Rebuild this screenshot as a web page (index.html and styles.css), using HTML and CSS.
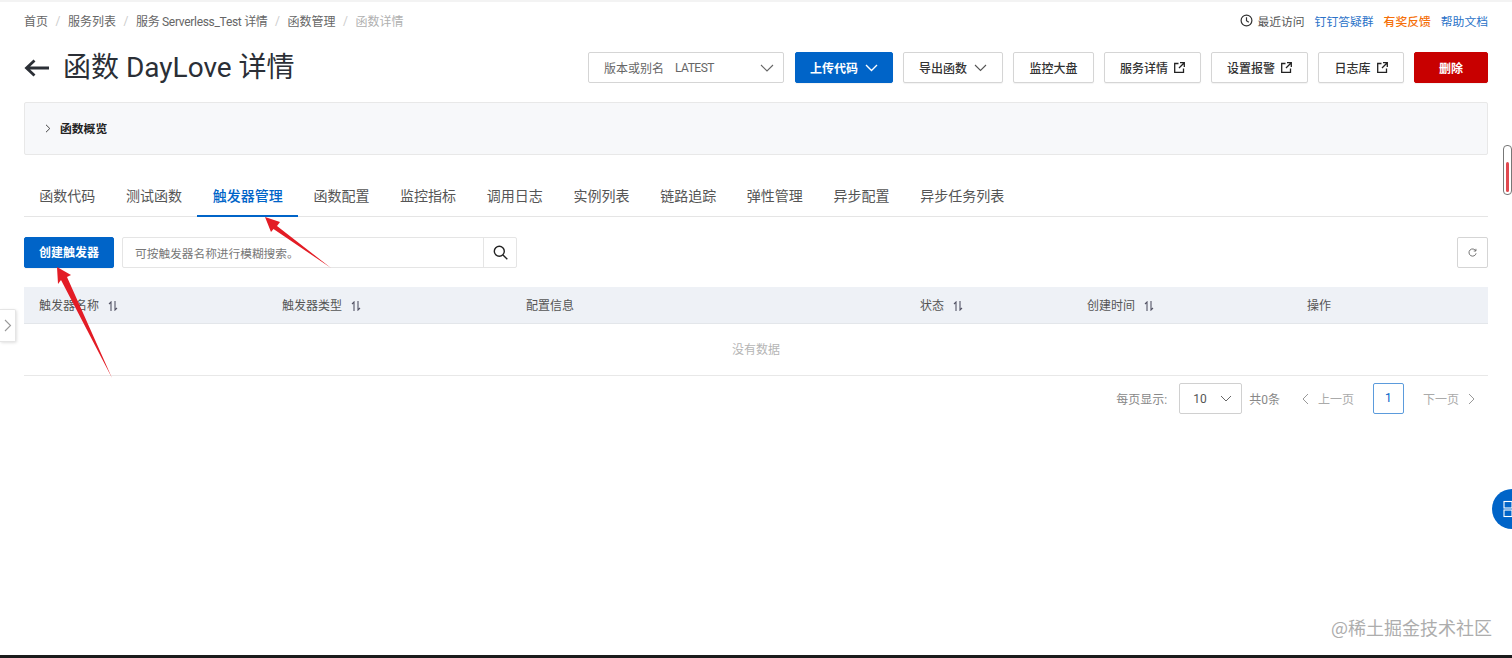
FILE: index.html
```html
<!doctype html>
<html lang="zh">
<head>
    <meta charset="utf-8">
    <meta name="viewport" content="width=device-width, initial-scale=1.0">
    <title>函数详情</title>
    <link rel="stylesheet" href="styles.css">
</head>
<body>
    <div class="top-strip"></div>
    <div class="page">
        <div class="crumb-row">
            <div class="breadcrumb">
                <span>首页</span><i>/</i>
                <span>服务列表</span><i>/</i>
                <span class="crumb-service">服务 Serverless_Test 详情</span><i>/</i>
                <span>函数管理</span><i>/</i>
                <span class="current">函数详情</span>
            </div>
            <div class="top-links">
                <span class="recent">
                    <svg width="13" height="13" viewBox="0 0 13 13" fill="none" stroke="#333" stroke-width="1.2"><circle cx="6.5" cy="6.5" r="5.4"/><path d="M6.5 3.2v3.5l2.3 1.5"/></svg>
                    最近访问
                </span>
                <a class="blue">钉钉答疑群</a>
                <a class="orange">有奖反馈</a>
                <a class="blue">帮助文档</a>
            </div>
        </div>

        <div class="title-row">
            <div class="title">
                <svg class="back" width="25" height="20" viewBox="0 0 25 20" fill="none" stroke="#2b2f36" stroke-width="2.8"><path d="M25 10H2.500M10.500 2.500L2.500 10l8 7.500"/></svg>
                <h1>函数 DayLove 详情</h1>
            </div>
            <div class="actions">
                <div class="version">
                    <span>版本或别名</span><span class="version-val">LATEST</span>
                    <svg class="chev" width="14" height="8" viewBox="0 0 14 8" fill="none" stroke="#666" stroke-width="1.1"><path d="M1 1l6 6 6-6"/></svg>
                </div>
                <button class="btn primary w-upload">上传代码
                    <svg width="13" height="8" viewBox="0 0 13 8" fill="none" stroke="#fff" stroke-width="1.4"><path d="M1 1l5.500 5.500L12 1"/></svg>
                </button>
                <button class="btn w-export">导出函数
                    <svg width="13" height="8" viewBox="0 0 13 8" fill="none" stroke="#555" stroke-width="1.1"><path d="M1 1l5.500 5.500L12 1"/></svg>
                </button>
                <button class="btn w-monitor">监控大盘</button>
                <button class="btn w-service">服务详情
                    <svg class="ext" width="11" height="11" viewBox="0 0 11 11" fill="none" stroke="#222" stroke-width="1.3"><path d="M4.500 1.500H.7v8.800h8.800V6.500M6 .7h4.300V5M10.300.7L5 6"/></svg>
                </button>
                <button class="btn w-alarm">设置报警
                    <svg class="ext" width="11" height="11" viewBox="0 0 11 11" fill="none" stroke="#222" stroke-width="1.3"><path d="M4.500 1.500H.7v8.800h8.800V6.500M6 .7h4.300V5M10.300.7L5 6"/></svg>
                </button>
                <button class="btn w-log">日志库
                    <svg class="ext" width="11" height="11" viewBox="0 0 11 11" fill="none" stroke="#222" stroke-width="1.3"><path d="M4.500 1.500H.7v8.800h8.800V6.500M6 .7h4.300V5M10.300.7L5 6"/></svg>
                </button>
                <button class="btn danger w-delete">删除</button>
            </div>
        </div>

        <div class="overview">
            <svg width="6" height="9" viewBox="0 0 6 9" fill="none" stroke="#444" stroke-width="1"><path d="M1 .8l3.800 3.700L1 8.200"/></svg>
            <span class="overview-label">函数概览</span>
        </div>

        <div class="tabs">
            <span class="tab">函数代码</span>
            <span class="tab">测试函数</span>
            <span class="tab active">触发器管理</span>
            <span class="tab">函数配置</span>
            <span class="tab">监控指标</span>
            <span class="tab">调用日志</span>
            <span class="tab">实例列表</span>
            <span class="tab">链路追踪</span>
            <span class="tab">弹性管理</span>
            <span class="tab">异步配置</span>
            <span class="tab">异步任务列表</span>
        </div>

        <div class="toolbar">
            <button class="btn primary w-create">创建触发器</button>
            <div class="search">
                <span class="search-text">可按触发器名称进行模糊搜索。</span>
                <span class="search-btn">
                    <svg width="15" height="15" viewBox="0 0 15 15" fill="none" stroke="#222" stroke-width="1.4"><circle cx="6.300" cy="6.300" r="5"/><path d="M10 10l4.300 4.300"/></svg>
                </span>
            </div>
            <span class="refresh">
                <svg width="9" height="9" viewBox="0 0 11 11" fill="none" stroke="#666" stroke-width="1.1"><path d="M9.500 3.500A4.400 4.400 0 1 0 9.900 6.500M9.700 1v2.700H7"/></svg>
            </span>
        </div>

        <div class="table-head">
            <span>触发器名称<svg class="sort" width="10" height="10" viewBox="0 0 10 10" fill="none" stroke="#556" stroke-width="1.1"><path d="M3 10V1L1 3M7 0v9l2-2"/></svg></span>
            <span>触发器类型<svg class="sort" width="10" height="10" viewBox="0 0 10 10" fill="none" stroke="#556" stroke-width="1.1"><path d="M3 10V1L1 3M7 0v9l2-2"/></svg></span>
            <span>配置信息</span>
            <span>状态<svg class="sort" width="10" height="10" viewBox="0 0 10 10" fill="none" stroke="#556" stroke-width="1.1"><path d="M3 10V1L1 3M7 0v9l2-2"/></svg></span>
            <span>创建时间<svg class="sort" width="10" height="10" viewBox="0 0 10 10" fill="none" stroke="#556" stroke-width="1.1"><path d="M3 10V1L1 3M7 0v9l2-2"/></svg></span>
            <span>操作</span>
        </div>
        <div class="table-empty">没有数据</div>

        <div class="pager">
            <span>每页显示:</span>
            <div class="page-size">
                <span>10</span>
                <svg width="12" height="7" viewBox="0 0 12 7" fill="none" stroke="#666" stroke-width="1"><path d="M1 1l5 5 5-5"/></svg>
            </div>
            <span>共0条</span>
            <span class="pg-link prev">
                <svg width="7" height="12" viewBox="0 0 7 12" fill="none" stroke="#999" stroke-width="1"><path d="M6 1L1 6l5 5"/></svg>
                上一页
            </span>
            <span class="pg-num">1</span>
            <span class="pg-link next">下一页
                <svg width="7" height="12" viewBox="0 0 7 12" fill="none" stroke="#999" stroke-width="1"><path d="M1 1l5 5-5 5"/></svg>
            </span>
        </div>
    </div>
    <div class="bottom-bar"></div>

    <!-- things lying over the page -->
    <div class="side-handle">
        <svg width="8" height="13" viewBox="0 0 8 13" fill="none" stroke="#999" stroke-width="1.1"><path d="M1 1l5.500 5.500L1 12"/></svg>
    </div>
    <div class="float-ball">
        <svg width="10" height="18" viewBox="0 0 10 18" fill="none" stroke="#fff" stroke-width="1.1"><rect x="2" y="1.500" width="8" height="6.500"/><rect x="2" y="10" width="8" height="6.500"/></svg>
    </div>
    <div class="scroll-thumb"><div class="scroll-fill"></div></div>
    <div class="watermark">@稀土掘金技术社区</div>
    <svg class="arrows" width="1512" height="658" viewBox="0 0 1512 658" fill="#e31c25">
        <polygon points="265,217 280,222 277,226 331,268 273.500,229 271,232"/>
        <polygon points="57,267 71,275 67,277 112,378 61,280 58,284"/>
    </svg>
</body>
</html>
```

FILE: styles.css
```css
* {
    box-sizing: border-box;
}
html, body {
    margin: 0;
    height: 658px;
    overflow: hidden;
}
body {
    position: relative;
    display: flex;
    flex-direction: column;
    background: #fff;
    color: #333;
    font-family: Roboto, "Noto Sans CJK SC", sans-serif;
    font-size: 12px;
}
.top-strip {
    height: 2px;
    background: #f3f3f3;
}
.bottom-bar {
    height: 3px;
    background: #1b1b1b;
}
.page {
    flex: 1;
    padding: 0 24px;
}

/* breadcrumb */
.crumb-row {
    height: 37px;
    display: flex;
    justify-content: space-between;
    align-items: center;
}
.breadcrumb {
    display: flex;
    align-items: center;
    color: #666;
}
.breadcrumb i {
    font-style: normal;
    color: #ccc;
    margin: 0 7.500px;
}
.crumb-service {
    letter-spacing: -0.3px;
}
.breadcrumb .current {
    color: #b0b0b0;
}
.top-links {
    display: flex;
    align-items: center;
    gap: 10px;
    font-size: 11.8px;
}
.recent {
    display: flex;
    align-items: center;
    gap: 4px;
    color: #555;
}
.blue {
    color: #2a72c8;
}
.orange {
    color: #f5700a;
    font-weight: 500;
}

/* title row */
.title-row {
    margin-top: 13px;
    display: flex;
    justify-content: space-between;
    align-items: center;
    height: 31px;
}
.title {
    display: flex;
    align-items: center;
}
.back {
    margin-right: 14px;
}
h1 {
    margin: 0;
    font-size: 28px;
    font-weight: 400;
    color: #2b2f36;
    line-height: 31px;
}
.actions {
    display: flex;
    gap: 10px;
}
.btn {
    height: 31px;
    padding: 0;
    border: 1px solid #d5d5d5;
    border-radius: 2px;
    background: #fff;
    color: #333;
    font-family: inherit;
    font-size: 12px;
    font-weight: 500;
    display: flex;
    align-items: center;
    justify-content: center;
    box-shadow: 0 1px 1px rgba(0,0,0,0.05);
}
.btn svg {
    margin-left: 7px;
}
.btn .ext {
    margin-left: 6px;
}
.btn.primary {
    background: #0064c8;
    border-color: #0064c8;
    color: #fff;
    font-weight: 700;
}
.btn.danger {
    background: #c80000;
    border-color: #c80000;
    color: #fff;
    font-weight: 700;
}
.w-upload { width: 98px; }
.w-export { width: 100px; }
.w-monitor { width: 81px; }
.w-service { width: 97px; }
.w-alarm { width: 97px; }
.w-log { width: 86px; }
.w-delete { width: 74px; }
.w-create { width: 90px; padding-bottom: 2px; }
.version {
    width: 196px;
    height: 31px;
    margin-right: 1px;
    padding: 0 15px;
    border: 1px solid #d5d5d5;
    border-radius: 2px;
    display: flex;
    align-items: center;
    color: #666;
}
.version-val {
    margin-left: 11px;
    letter-spacing: -0.5px;
}
.version .chev {
    margin-left: auto;
    margin-right: -6px;
}

/* overview panel */
.overview {
    margin-top: 19px;
    height: 53px;
    padding-left: 20px;
    display: flex;
    align-items: center;
    gap: 9px;
    background: #f7f8fa;
    border: 1px solid #e8e8e8;
    border-radius: 2px;
    color: #222;
    font-size: 11.8px;
    font-weight: 700;
}
.overview-label {
    padding-bottom: 2px;
}

/* tabs */
.tabs {
    margin-top: 21px;
    height: 41px;
    display: flex;
    border-bottom: 1px solid #e5e5e5;
}
.tab {
    height: 41px;
    padding: 0 15.35px;
    line-height: 40px;
    font-size: 14px;
    color: #555;
    white-space: nowrap;
}
.tab.active {
    color: #0064c8;
    font-weight: 500;
    border-bottom: 2px solid #0064c8;
}

/* toolbar */
.toolbar {
    margin-top: 20px;
    display: flex;
    gap: 8px;
}
.search {
    width: 395px;
    height: 31px;
    display: flex;
    border: 1px solid #e5e5e5;
    border-radius: 2px;
}
.search-text {
    flex: 1;
    padding: 2px 0 0 12px;
    line-height: 29px;
    font-size: 11.7px;
    color: #777;
}
.search-btn {
    width: 33px;
    border-left: 1px solid #e5e5e5;
    display: flex;
    align-items: center;
    justify-content: center;
}
.refresh {
    margin-left: auto;
    width: 31px;
    height: 31px;
    border: 1px solid #d5d5d5;
    border-radius: 2px;
    display: flex;
    align-items: center;
    justify-content: center;
}

/* table */
.table-head {
    margin-top: 19px;
    height: 37px;
    display: grid;
    grid-template-columns: 243px 244px 394px 167px 220px 196px;
    align-items: center;
    background: #eef1f6;
    border-bottom: 1px solid #e3e6ea;
    color: #555;
}
.table-head span {
    padding: 0 0 1px 15px;
    display: flex;
    align-items: center;
}
.sort {
    margin: 2px 0 0 9px;
}
.table-empty {
    height: 52px;
    line-height: 52px;
    text-align: center;
    color: #b5b5b5;
    border-bottom: 1px solid #e8e8e8;
}

/* pager */
.pager {
    margin-top: 7px;
    height: 31px;
    display: flex;
    justify-content: flex-end;
    align-items: center;
    color: #888;
}
.page-size {
    width: 63px;
    height: 31px;
    margin: 0 7px 0 12px;
    padding: 0 9px 0 13px;
    border: 1px solid #d0d0d0;
    border-radius: 2px;
    display: flex;
    align-items: center;
    justify-content: space-between;
    color: #555;
}
.pg-link {
    display: flex;
    align-items: center;
    gap: 9px;
    color: #aaa;
}
.prev {
    margin-left: 22px;
}
.next {
    margin-right: 13px;
}
.pg-num {
    width: 31px;
    height: 31px;
    margin: 0 19px;
    border: 1px solid #5b9bdc;
    border-radius: 2px;
    color: #0064c8;
    text-align: center;
    line-height: 29px;
}

/* overlays */
.side-handle {
    position: absolute;
    left: 0;
    top: 309px;
    width: 16px;
    height: 33px;
    background: #fff;
    border: 1px solid #e5e5e5;
    border-left: 0;
    border-radius: 0 2px 2px 0;
    box-shadow: 1px 1px 3px rgba(0,0,0,0.12);
    display: flex;
    align-items: center;
    justify-content: center;
}
.float-ball {
    position: absolute;
    left: 1492px;
    top: 489px;
    width: 40px;
    height: 40px;
    padding-left: 10px;
    border-radius: 50%;
    background: #0064c8;
    display: flex;
    align-items: center;
}
.scroll-thumb {
    position: absolute;
    left: 1503px;
    top: 145px;
    width: 9px;
    height: 50px;
    padding: 16px 2px 2px;
    border: 1px solid #777;
    border-radius: 4px;
    background: #fff;
}
.scroll-fill {
    height: 100%;
    background: #e0484f;
    border-radius: 2px;
}
.watermark {
    position: absolute;
    right: 20px;
    top: 614px;
    font-size: 18px;
    line-height: 26px;
    color: #adadad;
    font-family: "Noto Sans CJK SC", sans-serif;
}
.arrows {
    position: absolute;
    left: 0;
    top: 0;
    pointer-events: none;
}
```
